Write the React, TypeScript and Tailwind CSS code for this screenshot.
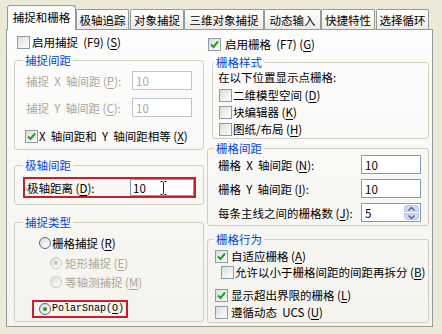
import React from "react";

type BoxProps = { checked?: boolean };

function Check({ checked }: BoxProps) {
  return (
    <span className="relative flex h-[13px] w-[13px] shrink-0 items-center justify-center border border-[#8F9BA6] bg-gradient-to-br from-[#DCDCD7] to-white">
      {checked && (
        <svg width="9" height="9" viewBox="0 0 9 9">
          <path d="M1 4.5 L3.5 7 L8 1.5" fill="none" stroke="#21A121" strokeWidth="2" />
        </svg>
      )}
    </span>
  );
}

function Radio({ checked, disabled }: BoxProps & { disabled?: boolean }) {
  return (
    <span
      className={
        "flex h-[12px] w-[12px] shrink-0 items-center justify-center rounded-full border bg-gradient-to-br from-[#DCDCD7] to-white " +
        (disabled ? "border-[#CAC8BB]" : "border-[#4A6B8E]")
      }
    >
      {checked && (
        <span className={"h-[4px] w-[4px] rounded-full " + (disabled ? "bg-[#CAC8BB]" : "bg-[#21A121]")} />
      )}
    </span>
  );
}

function U({ c }: { c: string }) {
  return <span className="underline underline-offset-2">{c}</span>;
}

function Field({ value, disabled, spin }: { value: string; disabled?: boolean; spin?: boolean }) {
  return (
    <div
      className={
        "relative flex h-[19px] w-[60px] shrink-0 items-center border bg-white pl-[3px] " +
        (disabled ? "border-[#B9C4CF] text-[#ACA899]" : "border-[#7F9DB9] text-black")
      }
    >
      {value}
      {spin && (
        <div className="absolute right-[1px] top-[1px] flex flex-col gap-[1px]">
          <span className="flex h-[7px] w-[15px] items-center justify-center rounded-t-[3px] border border-[#B7CAF5] bg-[#C9D8FC]">
            <svg width="7" height="4" viewBox="0 0 7 4">
              <path d="M0.5 3.5 L3.5 0.5 L6.5 3.5" fill="none" stroke="#4D6185" strokeWidth="1.3" />
            </svg>
          </span>
          <span className="flex h-[7px] w-[15px] items-center justify-center rounded-b-[3px] border border-[#B7CAF5] bg-[#C9D8FC]">
            <svg width="7" height="4" viewBox="0 0 7 4">
              <path d="M0.5 0.5 L3.5 3.5 L6.5 0.5" fill="none" stroke="#4D6185" strokeWidth="1.3" />
            </svg>
          </span>
        </div>
      )}
    </div>
  );
}

function Group({ className, children }: { className: string; children: React.ReactNode }) {
  return <fieldset className={"rounded-[3px] border border-[#D0D0BF] " + className}>{children}</fieldset>;
}

const tabs = [
  { t: "极轴追踪", w: "w-[53px]" },
  { t: "对象捕捉", w: "ml-[1px] w-[54px]" },
  { t: "三维对象捕捉", w: "w-[80px]" },
  { t: "动态输入", w: "w-[57px]" },
  { t: "快捷特性", w: "w-[54px]" },
  { t: "选择循环", w: "ml-[1px] w-[53px]" },
];

export default function App() {
  return (
    <div className="h-[334px] w-[442px] overflow-hidden whitespace-nowrap bg-[#ECE9D8] pl-[6px] pt-[5px] font-['Noto_Sans_CJK_SC',sans-serif] text-[11.5px] leading-[16px] text-black">
      <div className="relative z-10 flex h-[24px] items-end">
        <div className="-mb-px ml-[1px] flex h-[25px] w-[69px] items-start justify-center rounded-t-[3px] border border-b-0 border-[#919B9C] bg-[#FDFDFD] pt-[3px]">
          捕捉和栅格
        </div>
        {tabs.map((x) => (
          <div
            key={x.t}
            className={
              "flex h-[20px] items-center justify-center rounded-t-[2px] border border-b-0 border-[#919B9C] bg-gradient-to-b from-white to-[#ECEBE6] " +
              x.w
            }
          >
            {x.t}
          </div>
        ))}
      </div>

      <div className="flex h-[298px] w-[427px] border border-[#919B9C] bg-gradient-to-b from-[#FDFDFD] to-[#F4F3EE] pl-[7px]">
        {/* left */}
        <div className="flex w-[190px] flex-col">
          <div className="mt-[5px] flex h-[14px] items-center gap-[2px] pl-[3px]">
            <Check />
            <span>启用捕捉 &nbsp;(F9) (<U c="S" />)</span>
          </div>

          <Group className="mt-[3px] h-[98px]">
            <legend className="ml-[8px] px-[2px] text-[#0046D5]">捕捉间距</legend>
            <div className="mt-[3px] flex items-center pl-[11px] text-[#ACA899]">
              <span className="w-[106px]">捕捉 &nbsp;X &nbsp;轴间距 (<U c="P" />):</span>
              <Field value="10" disabled />
            </div>
            <div className="mt-[8px] flex items-center pl-[11px] text-[#ACA899]">
              <span className="w-[106px]">捕捉 &nbsp;Y &nbsp;轴间距 (<U c="C" />):</span>
              <Field value="10" disabled />
            </div>
            <div className="mt-[12px] flex h-[14px] items-center gap-[1px] pl-[10px]">
              <Check checked />
              <span>X &nbsp;轴间距和 &nbsp;Y &nbsp;轴间距相等 (<U c="X" />)</span>
            </div>
          </Group>

          <Group className="mt-[7px] h-[48px]">
            <legend className="ml-[8px] px-[2px] text-[#0046D5]">极轴间距</legend>
            <div className="ml-[8px] mt-[4px] flex h-[21px] w-[173px] items-center border-2 border-[#C8202A] pl-[2px]">
              <span className="w-[103px]">极轴距离 (<U c="D" />):</span>
              <div className="relative flex h-[17px] flex-1 items-center border border-[#7F9DB9] bg-white pl-[2px]">
                10
                <svg className="absolute left-[29px] top-[1px]" width="7" height="14" viewBox="0 0 7 14">
                  <path d="M0.5 0.5 H2.5 L3.5 1.5 L4.5 0.5 H6.5 M3.5 1.5 V12.5 M0.5 13.5 H2.5 L3.5 12.5 L4.5 13.5 H6.5" fill="none" stroke="#222" strokeWidth="1" />
                </svg>
              </div>
            </div>
          </Group>

          <Group className="mt-[9px] h-[108px]">
            <legend className="ml-[8px] px-[2px] text-[#0046D5]">捕捉类型</legend>
            <div className="mt-[6px] flex h-[14px] items-center gap-[1px] pl-[24px]">
              <Radio />
              <span>栅格捕捉 (<U c="R" />)</span>
            </div>
            <div className="mt-[6px] flex h-[14px] items-center gap-[3px] pl-[35px] text-[#ACA899]">
              <Radio checked disabled />
              <span>矩形捕捉 (<U c="E" />)</span>
            </div>
            <div className="mt-[5px] flex h-[14px] items-center gap-[3px] pl-[35px] text-[#ACA899]">
              <Radio disabled />
              <span>等轴测捕捉 (<U c="M" />)</span>
            </div>
            <div className="ml-[17px] mt-[11px] flex h-[18px] w-[96px] items-center gap-[1px] border-2 border-[#C8202A] pl-[5px]">
              <Radio checked />
              <span className="font-['Liberation_Mono',monospace] text-[10px]">PolarSnap(<U c="O" />)</span>
            </div>
          </Group>
        </div>

        {/* right */}
        <div className="ml-[3px] flex w-[222px] flex-col">
          <div className="mt-[7px] flex h-[14px] items-center gap-[4px] pl-[1px]">
            <Check checked />
            <span>启用栅格 &nbsp;(F7) (<U c="G" />)</span>
          </div>

          <Group className="ml-[5px] mt-[3px] h-[85px]">
            <legend className="ml-[1px] px-[2px] text-[#0046D5]">栅格样式</legend>
            <div className="-mt-[1px] pl-[5px]">在以下位置显示点栅格:</div>
            <div className="mt-[3px] flex h-[14px] items-center gap-[1px] pl-[6px]">
              <Check />
              <span>二维模型空间 (<U c="D" />)</span>
            </div>
            <div className="mt-[3px] flex h-[14px] items-center gap-[1px] pl-[6px]">
              <Check />
              <span>块编辑器 (<U c="K" />)</span>
            </div>
            <div className="mt-[3px] flex h-[14px] items-center gap-[1px] pl-[6px]">
              <Check />
              <span>图纸/布局 (<U c="H" />)</span>
            </div>
          </Group>

          <Group className="mt-[1px] h-[86px]">
            <legend className="ml-[6px] px-[2px] text-[#0046D5]">栅格间距</legend>
            <div className="-mt-[1px] flex items-center pl-[10px]">
              <span className="w-[143px]">栅格 &nbsp;X &nbsp;轴间距 (<U c="N" />):</span>
              <Field value="10" />
            </div>
            <div className="mt-[5px] flex items-center pl-[10px]">
              <span className="w-[143px]">栅格 &nbsp;Y &nbsp;轴间距 (<U c="I" />):</span>
              <Field value="10" />
            </div>
            <div className="mt-[5px] flex items-center pl-[10px]">
              <span className="w-[143px]">每条主线之间的栅格数 (<U c="J" />):</span>
              <Field value="5" spin />
            </div>
          </Group>

          <Group className="mt-[5px] h-[92px]">
            <legend className="ml-[6px] px-[2px] text-[#0046D5]">栅格行为</legend>
            <div className="mt-[2px] flex h-[14px] items-center gap-[3px] pl-[7px]">
              <Check checked />
              <span>自适应栅格 (<U c="A" />)</span>
            </div>
            <div className="mt-[2px] flex h-[14px] items-center gap-[1px] pl-[13px]">
              <Check />
              <span>允许以小于栅格间距的间距再拆分 (<U c="B" />)</span>
            </div>
            <div className="mt-[9px] flex h-[14px] items-center gap-[3px] pl-[7px]">
              <Check checked />
              <span>显示超出界限的栅格 (<U c="L" />)</span>
            </div>
            <div className="mt-[3px] flex h-[14px] items-center gap-[3px] pl-[7px]">
              <Check />
              <span>遵循动态 &nbsp;UCS (<U c="U" />)</span>
            </div>
          </Group>
        </div>
      </div>
    </div>
  );
}
